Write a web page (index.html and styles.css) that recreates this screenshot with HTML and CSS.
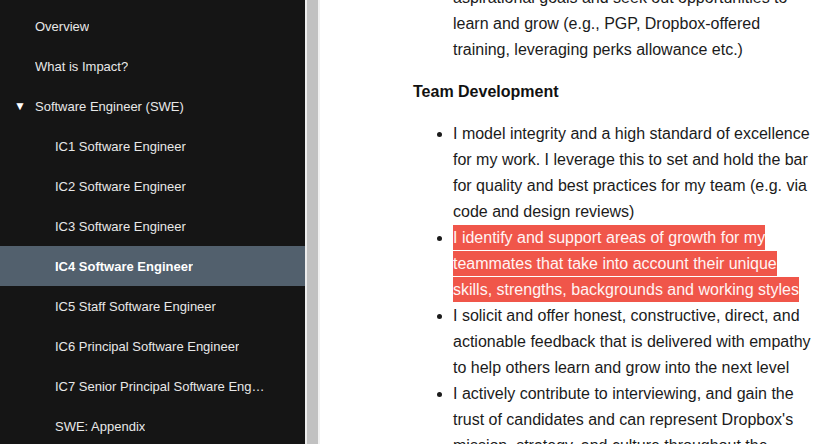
FILE: index.html
```html
<!DOCTYPE html>
<html>
<head>
<meta charset="utf-8">
<link rel="stylesheet" href="styles.css">
</head>
<body>
<div class="app">
  <nav class="sidebar">
    <ol class="toc">
      <li class="item"><span class="label">Overview</span></li>
      <li class="item"><span class="label">What is Impact?</span></li>
      <li class="item"><span class="toggle">▼</span><span class="label">Software Engineer (SWE)</span></li>
      <li class="item sub"><span class="label">IC1 Software Engineer</span></li>
      <li class="item sub"><span class="label">IC2 Software Engineer</span></li>
      <li class="item sub"><span class="label">IC3 Software Engineer</span></li>
      <li class="item sub active"><span class="label">IC4 Software Engineer</span></li>
      <li class="item sub"><span class="label">IC5 Staff Software Engineer</span></li>
      <li class="item sub"><span class="label">IC6 Principal Software Engineer</span></li>
      <li class="item sub"><span class="label">IC7 Senior Principal Software Engineer</span></li>
      <li class="item sub"><span class="label">SWE: Appendix</span></li>
    </ol>
  </nav>
  <div class="resizer"></div>
  <main class="content">
    <div class="page">
      <ul class="list">
        <li class="cont">aspirational goals and seek out opportunities to learn and grow (e.g., PGP, Dropbox-offered training, leveraging perks allowance etc.)</li>
      </ul>
      <h4 class="heading">Team Development</h4>
      <ul class="list">
        <li>I model integrity and a high standard of excellence for my work. I leverage this to set and hold the bar for quality and best practices for my team (e.g. via code and design reviews)</li>
        <li><span class="mark">I identify and support areas of growth for my teammates that take into account their unique skills, strengths, backgrounds and working styles</span></li>
        <li>I solicit and offer honest, constructive, direct, and actionable feedback that is delivered with empathy to help others learn and grow into the next level</li>
        <li>I actively contribute to interviewing, and gain the trust of candidates and can represent Dropbox's mission, strategy, and culture throughout the interview process</li>
      </ul>
    </div>
  </main>
</div>
</body>
</html>
```

FILE: styles.css
```css
html, body {
  margin: 0;
  padding: 0;
  height: 100%;
  overflow: hidden;
}
body {
  font-family: "Liberation Sans", Arial, sans-serif;
  background: #fff;
}
.app {
  display: flex;
  height: 444px;
}
.sidebar {
  width: 305px;
  flex: none;
  background: #151515;
  color: #e8e8e8;
  font-size: 13px;
}
.toc {
  list-style: none;
  margin: 0;
  padding: 6px 0 0 0;
}
.item {
  height: 40px;
  display: flex;
  align-items: center;
  padding: 0 39px 0 35px;
  position: relative;
}
.item.sub {
  padding-left: 55px;
}
.item.active {
  background: #52606d;
  color: #fff;
  font-weight: bold;
}
.label {
  white-space: nowrap;
  overflow: hidden;
  text-overflow: ellipsis;
  min-width: 0;
}
.toggle {
  position: absolute;
  left: 14px;
  top: 13px;
  font-size: 12px;
  color: #fff;
}
.resizer {
  width: 11px;
  flex: none;
  background: #c1c1c1;
  border-left: 2px solid #ececec;
  border-right: 2px solid #f1f1f1;
}
.content {
  flex: 1;
  overflow: hidden;
}
.page {
  margin-top: -15px;
  padding-left: 93px;
  width: 405px;
  font-size: 16px;
  line-height: 26px;
  color: #1b1b1b;
}
.list {
  margin: 0;
  padding-left: 40px;
}
.list li {
  margin: 0;
}
.list li.cont {
  list-style: none;
}
.heading {
  margin: 16px 0;
  font-size: 16px;
  font-weight: bold;
  color: #111;
}
.mark {
  background: #f0564a;
  color: #fff4f4;
  padding: 4px 0;
}
```
